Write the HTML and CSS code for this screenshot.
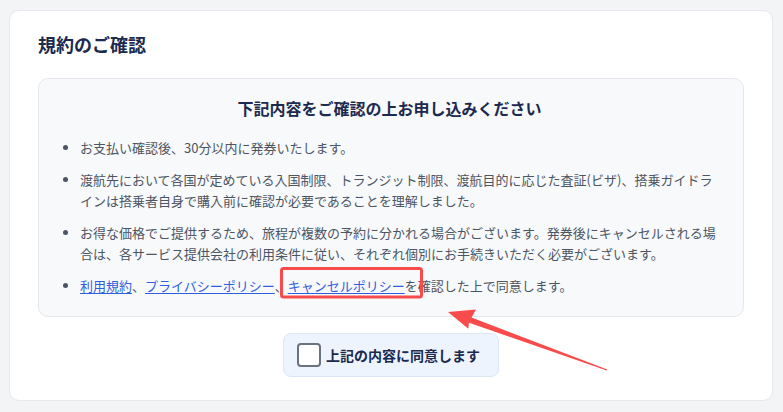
FILE: index.html
```html
<!DOCTYPE html>
<html lang="ja">
<head>
<meta charset="utf-8">
<title>規約のご確認</title>
<link rel="stylesheet" href="styles.css">
</head>
<body>
<section class="card">
  <h2 class="card-title">規約のご確認</h2>
  <div class="terms">
    <h3 class="terms-title">下記内容をご確認の上お申し込みください</h3>
    <ul class="terms-list">
      <li>お支払い確認後、30分以内に発券いたします。</li>
      <li>渡航先において各国が定めている入国制限、トランジット制限、渡航目的に応じた査証(ビザ)、搭乗ガイドラインは搭乗者自身で購入前に確認が必要であることを理解しました。</li>
      <li>お得な価格でご提供するため、旅程が複数の予約に分かれる場合がございます。発券後にキャンセルされる場合は、各サービス提供会社の利用条件に従い、それぞれ個別にお手続きいただく必要がございます。</li>
      <li><a href="#">利用規約</a>、<a href="#">プライバシーポリシー</a>、<a href="#">キャンセルポリシー</a>を確認した上で同意します。</li>
    </ul>
  </div>
  <div class="agree-row">
    <label class="agree"><input type="checkbox" class="agree-box"><span>上記の内容に同意します</span></label>
  </div>
</section>
<svg class="annotation" width="783" height="412" viewBox="0 0 783 412" aria-hidden="true">
  <rect x="281.5" y="268.5" width="140" height="28.5" rx="2" ry="2" fill="none" stroke="#f84c4c" stroke-width="3"/>
  <polygon points="448,312 476,309.5 471.5,317.5 607.3,369.4 606.7,370.6 469,322.8 468.3,328.8" fill="#f84c4c"/>
</svg>
</body>
</html>
```

FILE: styles.css
```css
* { box-sizing: border-box; }

html, body {
  margin: 0;
  background: #f3f4f6;
}

body {
  position: relative;
  width: 783px;
  height: 412px;
  padding: 10px 10px 11px 9px;
  font-family: "Noto Sans CJK JP", "Noto Sans", sans-serif;
  color: #4b5563;
  overflow: hidden;
}

.card {
  background: #ffffff;
  border: 1px solid #e6e8ec;
  border-radius: 10px;
  padding: 20px 28px 23px 28px;
}

.card-title {
  margin: 0 0 20px 0;
  font-size: 18px;
  line-height: 27px;
  font-weight: 700;
  color: #1b2a4e;
}

.terms {
  background: #f8f9fb;
  border: 1px solid #e4e7ec;
  border-radius: 10px;
  padding: 17px 27px 20px 24px;
}

.terms-title {
  margin: 0 0 17px 0;
  text-align: center;
  font-size: 16px;
  line-height: 24px;
  font-weight: 700;
  color: #1b2a4e;
}

.terms-list {
  margin: 0;
  padding: 0 0 0 17px;
  font-size: 13px;
  line-height: 21px;
  color: #4b5563;
}

.terms-list li {
  margin: 0 0 11px 0;
}

.terms-list li:last-child {
  margin-bottom: 0;
}

.terms-list li::marker {
  color: #4b5563;
}

.terms-list a {
  color: #2f5ee0;
  text-decoration: underline;
  text-underline-offset: 2px;
}

.agree-row {
  display: flex;
  justify-content: center;
  margin-top: 16px;
}

.agree {
  display: flex;
  align-items: center;
  gap: 5px;
  padding: 9px 18px 9px 13px;
  background: #eef4fe;
  border: 1px solid #dce6f7;
  border-radius: 8px;
  font-size: 14px;
  line-height: 24px;
  font-weight: 700;
  color: #1b2a4e;
}

.agree-box {
  appearance: none;
  -webkit-appearance: none;
  margin: 0;
  width: 24px;
  height: 24px;
  background: #ffffff;
  border: 2px solid #6b7280;
  border-radius: 4px;
}

.annotation {
  position: absolute;
  left: 0;
  top: 0;
  pointer-events: none;
}
```
